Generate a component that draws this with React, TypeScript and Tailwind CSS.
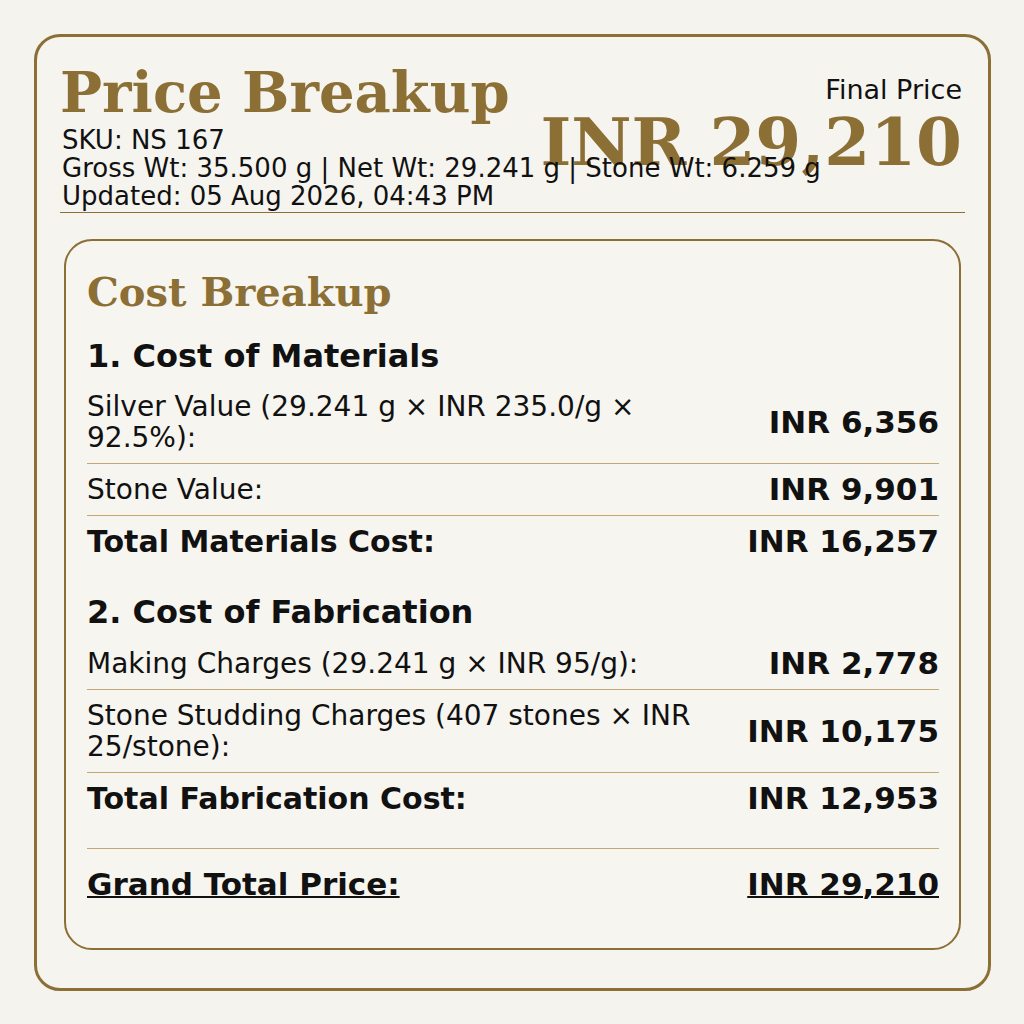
const gold = "text-[#8c6f35]"

type Line = { label: string; value: string }

const materials: Line[] = [
  { label: "Silver Value (29.241 g × INR 235.0/g × 92.5%):", value: "INR 6,356" },
  { label: "Stone Value:", value: "INR 9,901" },
]

const fabrication: Line[] = [
  { label: "Making Charges (29.241 g × INR 95/g):", value: "INR 2,778" },
  { label: "Stone Studding Charges (407 stones × INR 25/stone):", value: "INR 10,175" },
]

function Row({ label, value }: Line) {
  return (
    <div className="flex items-center justify-between gap-6 border-b border-[#c2a96f] py-[10px]">
      <span className="text-[28px] leading-[31px]">{label}</span>
      <span className="flex-none whitespace-nowrap text-[31px] font-bold leading-[31px]">{value}</span>
    </div>
  )
}

function TotalRow({ label, value }: Line) {
  return (
    <div className="flex items-center justify-between gap-6 py-[10px]">
      <span className="text-[30px] font-bold leading-[31px]">{label}</span>
      <span className="flex-none whitespace-nowrap text-[31px] font-bold leading-[31px]">{value}</span>
    </div>
  )
}

export default function App() {
  return (
    <div className="h-[1024px] w-[1024px] bg-[#f5f3ee] pl-[34px] pt-[34px] font-['DejaVu_Sans',sans-serif] text-[#111]">
      <div className="h-[957px] w-[957px] rounded-[26px] border-[3px] border-[#8c6f35] bg-[#f6f4ef] px-[23px] pt-[27px]">
        {/* header */}
        <div className="flex items-start justify-between">
          <div className="relative z-10 min-w-0 whitespace-nowrap">
            <h1 className={`font-['DejaVu_Serif',serif] text-[56px] font-bold leading-none ${gold}`}>
              Price Breakup
            </h1>
            <div className="mt-[6px] pl-[2px] text-[26px] leading-[28px]">
              <p>SKU: NS 167</p>
              <p>Gross Wt: 35.500 g | Net Wt: 29.241 g | Stone Wt: 6.259 g</p>
              <p>Updated: 05 Aug 2026, 04:43 PM</p>
            </div>
          </div>
          <div className="mt-[12px] flex-none pr-[3px] text-right">
            <p className="text-[27px] leading-[28px]">Final Price</p>
            <p className={`mt-[5px] font-['DejaVu_Serif',serif] text-[66px] font-bold leading-none ${gold}`}>
              INR 29,210
            </p>
          </div>
        </div>

        <div className="mt-[2px] h-px bg-[#8c6f35]" />

        {/* cost breakup */}
        <div className="mx-[4px] mt-[26px] rounded-[28px] border-2 border-[#8c6f35] bg-[#f7f5f0] pb-[48px] pl-[21px] pr-[20px] pt-[31px]">
          <h2 className={`font-['DejaVu_Serif',serif] text-[40px] font-bold leading-none ${gold}`}>
            Cost Breakup
          </h2>

          <h3 className="mb-[9px] mt-[28px] text-[32px] font-bold leading-none">1. Cost of Materials</h3>
          {materials.map((m) => (
            <Row key={m.label} {...m} />
          ))}
          <TotalRow label="Total Materials Cost:" value="INR 16,257" />

          <h3 className="mb-[10px] mt-[29px] text-[32px] font-bold leading-none">2. Cost of Fabrication</h3>
          {fabrication.map((f) => (
            <Row key={f.label} {...f} />
          ))}
          <TotalRow label="Total Fabrication Cost:" value="INR 12,953" />

          <div className="mt-[24px] flex items-center justify-between border-t border-[#c2a96f] pt-[20px]">
            <span className="text-[31px] font-bold leading-[31px] underline decoration-2">Grand Total Price:</span>
            <span className="text-[31px] font-bold leading-[31px] underline decoration-2">INR 29,210</span>
          </div>
        </div>
      </div>
    </div>
  )
}
